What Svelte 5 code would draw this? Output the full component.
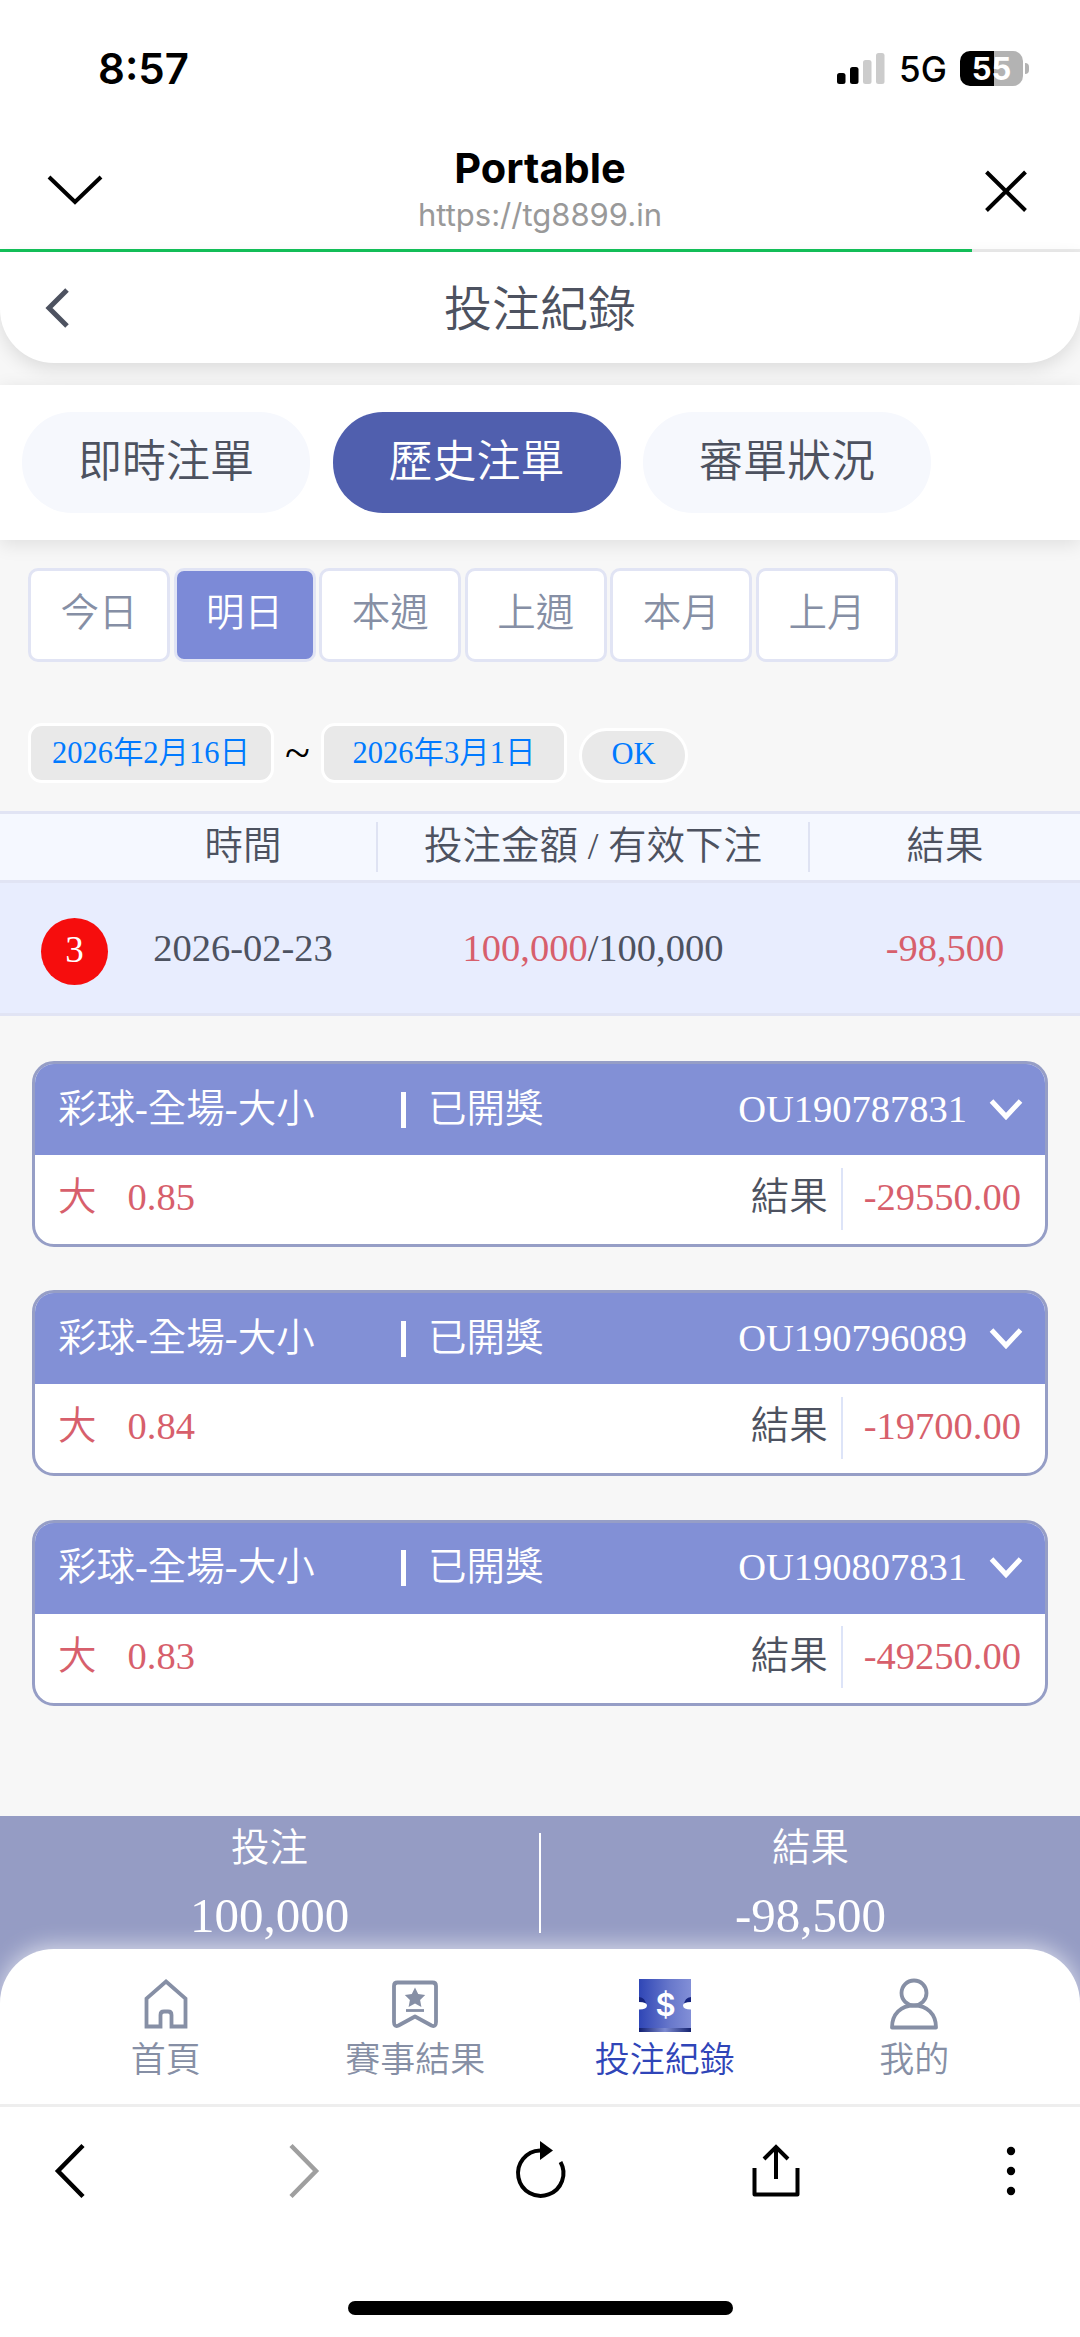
<script>
  const tabs = ['即時注單', '歷史注單', '審單狀況'];
  const ranges = ['今日', '明日', '本週', '上週', '本月', '上月'];
  const bets = [
    { id: 'OU190787831', odds: '0.85', result: '-29550.00' },
    { id: 'OU190796089', odds: '0.84', result: '-19700.00' },
    { id: 'OU190807831', odds: '0.83', result: '-49250.00' }
  ];

  let activeTab = '歷史注單';
  let activeRange = '明日';
</script>

<div class="screen">
  <div class="status">
    <span class="clock">8:57</span>
    <div class="status-right">
      <svg width="48" height="31" viewBox="0 0 48 31">
        <rect x="0" y="20" width="8.5" height="11" rx="2.5" />
        <rect x="13" y="14" width="8.5" height="17" rx="2.5" />
        <rect x="26" y="7" width="8.5" height="24" rx="2.5" fill="#ccc" />
        <rect x="39" y="0" width="8.5" height="31" rx="2.5" fill="#ccc" />
      </svg>
      <span class="network">5G</span>
      <div class="battery">55</div>
      <div class="battery-cap"></div>
    </div>
  </div>

  <div class="browser-bar">
    <svg width="60" height="48" viewBox="0 0 60 48" fill="none" stroke="#000" stroke-width="4">
      <path d="M4 10 L30 35 L56 10" />
    </svg>
    <div class="site">
      <div class="site-name">Portable</div>
      <div class="site-url">https://tg8899.in</div>
    </div>
    <svg width="60" height="48" viewBox="0 0 60 48" fill="none" stroke="#000" stroke-width="4">
      <path d="M11.500 5 L50.500 43.500 M50.500 5 L11.500 43.500" />
    </svg>
  </div>
  <div class="progress"><div class="progress-fill"></div></div>

  <div class="page">
    <div class="page-header">
      <svg width="30" height="44" viewBox="0 0 30 44" fill="none" stroke="#4d5260" stroke-width="5">
        <path d="M27 4 L9 22 L27 40" />
      </svg>
      <h1>投注紀錄</h1>
    </div>

    <div class="tabs">
      {#each tabs as tab}
        <button class="tab" class:active={tab === activeTab} on:click={() => (activeTab = tab)}>{tab}</button>
      {/each}
    </div>

    <div class="ranges">
      {#each ranges as range}
        <button class="range" class:active={range === activeRange} on:click={() => (activeRange = range)}>{range}</button>
      {/each}
    </div>

    <div class="dates">
      <div class="date">2026年2月16日</div>
      <span class="tilde">~</span>
      <div class="date">2026年3月1日</div>
      <button class="ok">OK</button>
    </div>

    <div class="table-head">
      <div class="col-badge"></div>
      <div class="col-time">時間</div>
      <div class="line"></div>
      <div class="col-amount">投注金額 / 有效下注</div>
      <div class="line"></div>
      <div class="col-result">結果</div>
    </div>
    <div class="table-row">
      <div class="col-badge"><span class="badge">3</span></div>
      <div class="col-time">2026-02-23</div>
      <div class="col-amount"><span class="red">100,000</span>/100,000</div>
      <div class="col-result red">-98,500</div>
    </div>

    <div class="cards">
      {#each bets as bet}
        <div class="card">
          <div class="card-head">
            <span class="game">彩球-全場-大小</span>
            <span class="bar"></span>
            <span class="state">已開獎</span>
            <span class="bet-id">{bet.id}</span>
            <svg width="34" height="24" viewBox="0 0 34 24" fill="none" stroke="#fff" stroke-width="5">
              <path d="M2.500 3 L17 18.500 L31.500 3" />
            </svg>
          </div>
          <div class="card-body">
            <span class="pick">大</span>
            <span class="odds">{bet.odds}</span>
            <span class="label">結果</span>
            <span class="card-line"></span>
            <span class="red">{bet.result}</span>
          </div>
        </div>
      {/each}
    </div>

    <div class="summary">
      <div class="sum">
        <span>投注</span>
        <span class="sum-value">100,000</span>
      </div>
      <div class="sum-line"></div>
      <div class="sum">
        <span>結果</span>
        <span class="sum-value">-98,500</span>
      </div>
    </div>
  </div>

  <div class="nav">
    <div class="nav-item">
      <svg width="56" height="56" viewBox="0 0 56 56" fill="none" stroke="#868fa5" stroke-width="3.800" stroke-linejoin="round">
        <path d="M28 4.500 L47.500 21.500 V49.500 H33.500 V38 Q33.500 34.500 30 34.500 H26 Q22.500 34.500 22.500 38 V49.500 H8.500 V21.500 Z" stroke-linejoin="miter" />
      </svg>
      <span>首頁</span>
    </div>
    <div class="nav-item">
      <svg width="56" height="56" viewBox="0 0 56 56" fill="none" stroke="#868fa5" stroke-width="3.800" stroke-linejoin="round">
        <path d="M10.500 5.500 H45.500 Q49 5.500 49 9 V45 Q49 50.500 44.500 48.500 L28 39.500 L11.500 48.500 Q7 50.500 7 45 V9 Q7 5.500 10.500 5.500 Z" />
        <path d="M28 10.500 L31.200 17 L38.200 18 L33.100 22.900 L34.400 30 L28 26.600 L21.600 30 L22.900 22.900 L17.800 18 L24.800 17 Z" fill="#868fa5" stroke="none" />
        <path d="M19 33.500 H37" stroke-width="2.800" />
      </svg>
      <span>賽事結果</span>
    </div>
    <div class="nav-item active">
      <svg width="56" height="56" viewBox="0 0 56 56">
        <defs>
          <linearGradient id="ticket">
            <stop offset="0" stop-color="#2f46b6" />
            <stop offset="0.600" stop-color="#6878cb" />
            <stop offset="1" stop-color="#828fd7" />
          </linearGradient>
          <linearGradient id="ticket-edge">
            <stop offset="0" stop-color="#111f71" />
            <stop offset="0.500" stop-color="#7d8bd2" />
            <stop offset="1" stop-color="#14226f" />
          </linearGradient>
        </defs>
        <rect x="2" y="2" width="52" height="50" fill="url(#ticket)" />
        <rect x="2" y="51" width="52" height="4" fill="url(#ticket-edge)" />
        <path d="M2 20 Q8.500 20.500 9 28 H2 Z M54 20 Q47.500 20.500 47 28 H54 Z" fill="#17257f" />
        <path d="M2 25 Q10 25 10 28.500 Q10 32.500 2 32.500 Z M54 25 Q46 25 46 28.500 Q46 32.500 54 32.500 Z" fill="#fff" />
        <text x="28.500" y="39" text-anchor="middle" fill="#fff">$</text>
      </svg>
      <span>投注紀錄</span>
    </div>
    <div class="nav-item">
      <svg width="56" height="56" viewBox="0 0 56 56" fill="none" stroke="#868fa5" stroke-width="3.800">
        <circle cx="28" cy="16" r="12.500" />
        <path d="M6 50.500 C6 37 15 28.500 28 28.500 C41 28.500 50 37 50 50.500 Z" stroke-linejoin="round" />
      </svg>
      <span>我的</span>
    </div>
  </div>

  <div class="toolbar">
    <svg width="60" height="60" viewBox="0 0 60 60" fill="none" stroke="#000" stroke-width="4.500">
      <path d="M45 4.500 L20 30 L45 55.500" />
    </svg>
    <svg width="60" height="60" viewBox="0 0 60 60" fill="none" stroke="#9f9f9f" stroke-width="4.500">
      <path d="M17 4.500 L42 30 L17 55.500" />
    </svg>
    <svg width="60" height="60" viewBox="0 0 60 60" fill="none" stroke="#000" stroke-width="4">
      <path d="M50.500 21 A22.700 22.700 0 1 1 30 9.500" />
      <path d="M30 0 L43 9.500 L30 19 Z" fill="#000" stroke="none" />
    </svg>
    <svg width="60" height="60" viewBox="0 0 60 60" fill="none" stroke="#000" stroke-width="4">
      <path d="M8.500 27 V53.500 H51.500 V27" stroke-linejoin="round" />
      <path d="M30 38 V7 M18 18 L30 6 L42 18" />
    </svg>
    <svg width="60" height="60" viewBox="0 0 60 60">
      <circle cx="29" cy="10" r="4.200" />
      <circle cx="29" cy="30" r="4.200" />
      <circle cx="29" cy="50" r="4.200" />
    </svg>
  </div>
  <div class="home-indicator"></div>
</div>

<style>
  :global(body) {
    margin: 0;
    background: #fff;
  }
  .screen {
    width: 1080px;
    height: 2337px;
    display: flex;
    flex-direction: column;
    overflow: hidden;
    background: #fff;
    font-family: 'Liberation Serif', 'Noto Sans CJK TC', serif;
    font-size: 38.5px;
    font-weight: 350;
    color: #4d5260;
  }
  .screen * {
    box-sizing: border-box;
  }
  svg {
    display: block;
    flex: none;
  }
  button {
    font: inherit;
    color: inherit;
    margin: 0;
    padding: 0;
  }
  .red {
    color: #d75f6c;
  }

  .status {
    height: 138px;
    padding: 0 51px 0 98px;
    display: flex;
    align-items: center;
    justify-content: space-between;
    font-family: Inter, sans-serif;
    color: #000;
  }
  .clock {
    font-size: 42px;
    font-weight: 600;
    margin-bottom: 1px;
  }
  .status-right {
    display: flex;
    align-items: center;
    margin-bottom: 1px;
  }
  .network {
    margin-left: 14px;
    font-size: 35px;
    font-weight: 500;
    width: 61px;
  }
  .battery {
    width: 63px;
    height: 35px;
    border-radius: 10px;
    background: linear-gradient(90deg, #000 54%, #b3b3b3 54%);
    color: #fff;
    font-size: 31px;
    font-weight: 700;
    line-height: 35px;
    text-align: center;
  }
  .battery-cap {
    width: 4px;
    height: 11px;
    margin-left: 2px;
    border-radius: 0 5px 5px 0;
    background: #b3b3b3;
  }

  .browser-bar {
    height: 111px;
    padding: 0 45px 5px;
    display: flex;
    align-items: center;
    justify-content: space-between;
    font-family: Inter, sans-serif;
  }
  .site {
    text-align: center;
    padding-bottom: 4px;
  }
  .site-name {
    color: #000;
    font-size: 41.5px;
    font-weight: 700;
    line-height: 50px;
  }
  .site-url {
    color: #999;
    font-size: 31px;
    font-weight: 400;
    line-height: 43px;
  }
  .progress {
    height: 3px;
    flex: none;
    background: #ebebeb;
  }
  .progress-fill {
    width: 972px;
    height: 3px;
    background: #14c25a;
  }

  .page {
    height: 1852px;
    flex: none;
    display: flex;
    flex-direction: column;
    background: #f7f7f7;
  }
  .page-header {
    height: 111px;
    flex: none;
    padding: 0 40px;
    display: flex;
    align-items: center;
    border-radius: 0 0 54px 54px;
    background: #fff;
    box-shadow: 0 6px 18px rgba(0, 0, 0, 0.11);
  }
  h1 {
    flex: 1;
    margin: 5px 30px 0 0;
    text-align: center;
    font-size: 48px;
    font-weight: inherit;
    line-height: 60px;
  }
  .tabs {
    height: 155px;
    flex: none;
    margin-top: 22px;
    padding: 27px 22px;
    display: flex;
    gap: 22.500px;
    background: #fff;
    box-shadow: 0 4px 18px rgba(0, 0, 0, 0.1);
  }
  .tab {
    width: 288px;
    height: 101px;
    border: none;
    border-radius: 50px;
    background: #f6f8fd;
    font-size: 44px;
    line-height: 98px;
  }
  .tab.active {
    background: #505fae;
    color: #fff;
  }
  .ranges {
    padding: 28px 28px 0;
    display: flex;
    gap: 3.600px;
  }
  .range {
    width: 142px;
    height: 94px;
    border: 3px solid #e1e4f4;
    border-radius: 10px;
    background: #fff;
    color: #868fa5;
    line-height: 82px;
    padding-bottom: 5px;
  }
  .range.active {
    background: #7c8ad7;
    color: #fff;
  }

  .dates {
    margin: 61px 0 0 28px;
    height: 60px;
    display: flex;
    align-items: flex-end;
    font-size: 30.5px;
    color: #007aff;
  }
  .date,
  .ok {
    border: 3px solid #fff;
    background: #e9e9e9;
  }
  .date {
    width: 246px;
    height: 60px;
    border-radius: 14px;
    line-height: 54px;
    text-align: center;
  }
  .tilde {
    width: 47px;
    text-align: center;
    color: #000;
    font-size: 46px;
    line-height: 60px;
  }
  .ok {
    width: 109px;
    height: 55px;
    margin-left: 12px;
    border-radius: 28px;
    line-height: 43px;
    padding-bottom: 3px;
    color: #007aff;
  }

  .table-head {
    height: 72px;
    flex: none;
    margin-top: 28px;
    display: flex;
    align-items: center;
    border-top: 3px solid #e1e4f4;
    border-bottom: 3px solid #e1e4f4;
    background: #f5f8ff;
    line-height: 60px;
    text-align: center;
  }
  .table-head div:not(.line) {
    padding-bottom: 2px;
  }
  .line {
    width: 2px;
    height: 50px;
    background: #dfe3f3;
  }
  .col-badge {
    width: 110px;
  }
  .col-time {
    width: 266px;
  }
  .col-amount {
    flex: 1;
  }
  .col-result {
    width: 270px;
  }
  .table-row {
    height: 133px;
    flex: none;
    display: flex;
    align-items: center;
    border-bottom: 3px solid #e1e4f4;
    background: #e8edfe;
    text-align: center;
  }
  .badge {
    width: 67px;
    height: 67px;
    margin: 7px 0 0 41px;
    display: block;
    border-radius: 50%;
    background: #f60d0d;
    color: #fff;
    font-size: 37px;
    line-height: 64px;
  }

  .cards {
    flex: 1;
    padding: 45px 32px 0;
    display: flex;
    flex-direction: column;
    gap: 43.3px;
  }
  .card {
    height: 186px;
    flex: none;
    border: 3px solid #969ec6;
    border-radius: 22px;
    background: #fff;
    overflow: hidden;
  }
  .card-head {
    height: 91px;
    padding: 0 22px 0 23px;
    display: flex;
    align-items: center;
    background: #8290d6;
    color: #fff;
    line-height: 88px;
  }
  .card-head span:not(.bar) {
    padding-bottom: 2px;
  }
  .game {
    width: 343px;
  }
  .bar {
    width: 5px;
    height: 36px;
    margin-right: 22px;
    background: #fff;
  }
  .bet-id {
    margin: 0 22px 0 auto;
  }
  .card-body {
    height: 87px;
    padding: 0 24px 0 23px;
    display: flex;
    align-items: center;
    line-height: 84px;
  }
  .card-body span:not(.card-line) {
    padding-bottom: 3px;
  }
  .pick,
  .odds {
    color: #d75f6c;
  }
  .odds {
    margin-left: 31px;
  }
  .label {
    margin-left: auto;
  }
  .card-line {
    width: 2px;
    height: 62px;
    margin: 0 21px 0 13px;
    background: #dde4f8;
  }

  .summary {
    height: 288px;
    flex: none;
    display: flex;
    padding-top: 17px;
    background: #959cc4;
    color: #fff;
  }
  .sum {
    flex: 1;
    display: flex;
    flex-direction: column;
    align-items: center;
    line-height: 30px;
  }
  .sum-value {
    margin-top: 35px;
    font-size: 49px;
    line-height: 36px;
  }
  .sum-line {
    width: 2px;
    height: 100px;
    background: #fff;
  }

  .nav {
    height: 158px;
    flex: none;
    margin-top: -155px;
    padding: 28px 41px 0;
    display: flex;
    border-radius: 54px 54px 0 0;
    border-bottom: 3px solid #eee;
    background: #fff;
    box-shadow: 0 -3px 22px rgba(255, 255, 255, 0.65);
    z-index: 1;
  }
  .nav-item {
    flex: 1;
    display: flex;
    flex-direction: column;
    align-items: center;
    font-size: 35px;
    line-height: 40px;
    color: #868fa5;
  }
  .nav-item span {
    margin-top: 8px;
  }
  .nav-item.active {
    color: #2f45b8;
  }
  .nav-item text {
    font: 600 31px Inter, sans-serif;
  }

  .toolbar {
    padding: 34px 38px 0;
    display: flex;
    justify-content: space-between;
  }
  .home-indicator {
    width: 385px;
    height: 14px;
    flex: none;
    margin: 100px auto 0;
    border-radius: 7px;
    background: #000;
  }
</style>
